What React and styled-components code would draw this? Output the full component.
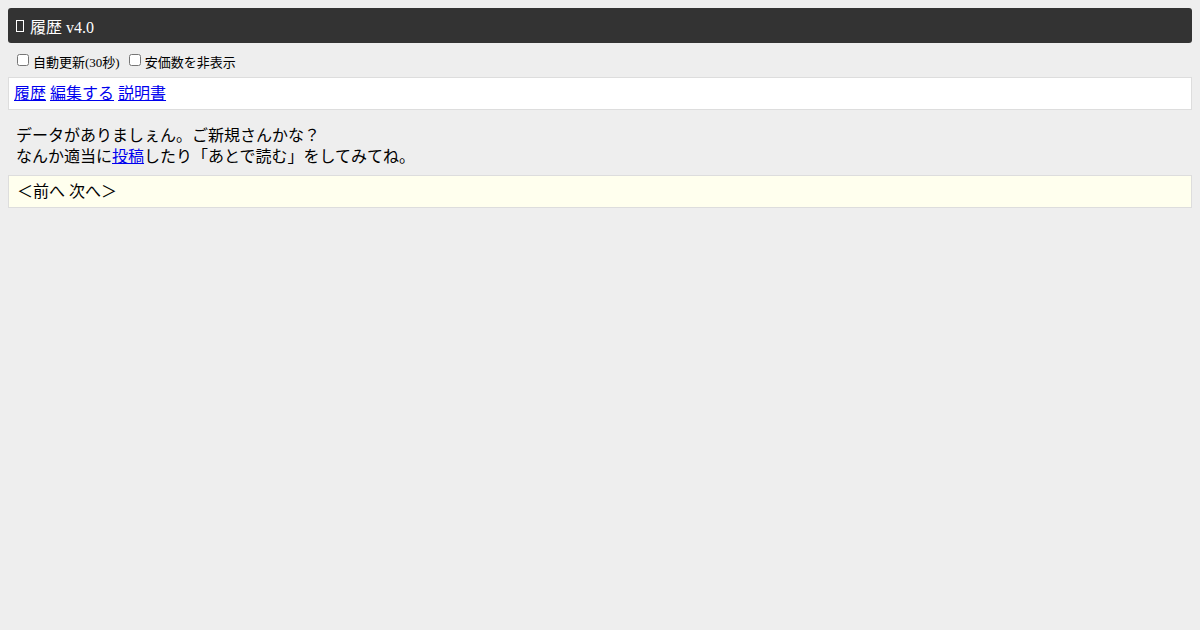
import React from 'react'
import styled, { createGlobalStyle } from 'styled-components'

const Global = createGlobalStyle`
  body {
    margin: 8px;
    background: #eeeeee;
    font-family: "Liberation Serif", "Noto Sans CJK JP", serif;
    font-size: 16px;
    color: #000;
  }
`

const Header = styled.div`
  display: flex;
  align-items: center;
  height: 35px;
  padding: 0 8px;
  background: #333333;
  border-radius: 3px;
  color: #fff;
  font-size: 16px;
`

const Tofu = styled.span`
  display: inline-block;
  width: 6px;
  height: 10px;
  border: 1px solid #fff;
  margin-right: 6px;
`

const Options = styled.div`
  display: flex;
  align-items: center;
  gap: 9px;
  height: 34px;
  padding: 0 9px;
  font-size: 13px;
`

const Option = styled.label`
  display: flex;
  align-items: center;
  gap: 4px;
  padding-top: 3px;
`

const Check = styled.input`
  margin: 0;
  width: 12px;
  height: 12px;
  position: relative;
  top: -2px;
`

const Box = styled.div`
  background: ${p => p.bg || '#fff'};
  border: 1px solid #dddddd;
  padding: ${p => p.pad || '5px'};
  line-height: 21px;
`

const Link = styled.a`
  color: #0000ee;
  text-decoration: underline;
  margin-right: 4px;
`

const Message = styled.div`
  padding: 15px 8px 8px 8px;
  line-height: 21px;
`

const InLink = styled.a`
  color: #0000ee;
  text-decoration: underline;
`

export default function App() {
  return (
    <>
      <Global />
      <Header><Tofu />履歴 v4.0</Header>
      <Options>
        <Option><Check type="checkbox" />自動更新(30秒)</Option>
        <Option><Check type="checkbox" />安価数を非表示</Option>
      </Options>
      <Box>
        <Link href="#">履歴</Link>
        <Link href="#">編集する</Link>
        <Link href="#">説明書</Link>
      </Box>
      <Message>
        データがありましぇん。ご新規さんかな？<br />
        なんか適当に<InLink href="#">投稿</InLink>したり「あとで読む」をしてみてね。
      </Message>
      <Box bg="#ffffee" pad="5px 8px">＜前へ 次へ＞</Box>
    </>
  )
}
